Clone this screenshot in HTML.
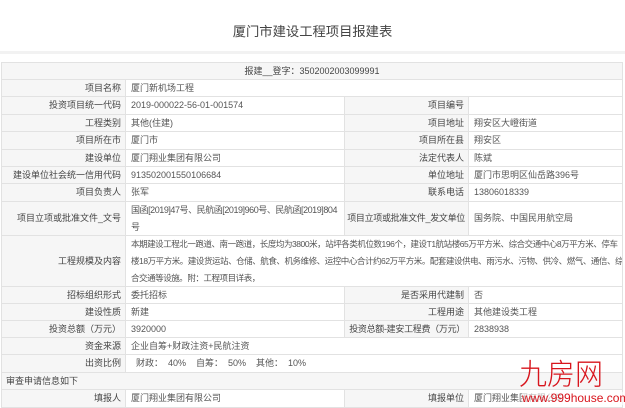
<!DOCTYPE html>
<html><head><meta charset="utf-8"><style>
*{margin:0;padding:0;box-sizing:border-box}
body{width:625px;height:408px;overflow:hidden;background:#fff;font-family:"Liberation Sans","Noto Sans CJK SC",sans-serif;font-size:9px;color:#555;position:relative}
.t{position:absolute;left:0;width:625px;top:21px;text-align:center;font-size:13.3px;color:#444}
.band{position:absolute;left:0;width:625px;top:51px;height:3px;background:#f2f2f2}
.c{position:absolute;border:1px solid #e2e2e2;margin:-1px 0 0 -1px;display:flex;align-items:center;padding:0 5px;line-height:17px;overflow:hidden;white-space:nowrap}
.l{background:#f6f6f6;justify-content:flex-end;color:#444;padding:0 4px}
.v{background:#fff}
.wm{position:absolute;color:#d8151d;font-family:"Noto Sans CJK SC",sans-serif;font-weight:300;font-size:28px;left:519px;top:356px;line-height:34px;transform:scaleY(1.05)}
.wu{position:absolute;color:#d8151d;font-size:12px;left:522px;top:392px;line-height:13px;background:rgba(255,255,255,.6)}
</style></head><body>
<div class="t">厦门市建设工程项目报建表</div>
<div class="band"></div>
<div class="c l" style="left:2px;top:63px;width:622px;height:18px;justify-content:center">报建__登字：3502002003099991</div>

<div class="c l" style="left:2px;top:80px;width:125px;height:18px">项目名称</div>
<div class="c v" style="left:126px;top:80px;width:498px;height:18px">厦门新机场工程</div>

<div class="c l" style="left:2px;top:97px;width:125px;height:19px">投资项目统一代码</div>
<div class="c v" style="left:126px;top:97px;width:220px;height:19px">2019-000022-56-01-001574</div>
<div class="c l" style="left:345px;top:97px;width:125px;height:19px">项目编号</div>
<div class="c v" style="left:469px;top:97px;width:155px;height:19px"></div>

<div class="c l" style="left:2px;top:115px;width:125px;height:18px">工程类别</div>
<div class="c v" style="left:126px;top:115px;width:220px;height:18px">其他(住建)</div>
<div class="c l" style="left:345px;top:115px;width:125px;height:18px">项目地址</div>
<div class="c v" style="left:469px;top:115px;width:155px;height:18px">翔安区大嶝街道</div>

<div class="c l" style="left:2px;top:132px;width:125px;height:19px">项目所在市</div>
<div class="c v" style="left:126px;top:132px;width:220px;height:19px">厦门市</div>
<div class="c l" style="left:345px;top:132px;width:125px;height:19px">项目所在县</div>
<div class="c v" style="left:469px;top:132px;width:155px;height:19px">翔安区</div>

<div class="c l" style="left:2px;top:150px;width:125px;height:18px">建设单位</div>
<div class="c v" style="left:126px;top:150px;width:220px;height:18px">厦门翔业集团有限公司</div>
<div class="c l" style="left:345px;top:150px;width:125px;height:18px">法定代表人</div>
<div class="c v" style="left:469px;top:150px;width:155px;height:18px">陈斌</div>

<div class="c l" style="left:2px;top:167px;width:125px;height:18px">建设单位社会统一信用代码</div>
<div class="c v" style="left:126px;top:167px;width:220px;height:18px">913502001550106684</div>
<div class="c l" style="left:345px;top:167px;width:125px;height:18px">单位地址</div>
<div class="c v" style="left:469px;top:167px;width:155px;height:18px">厦门市思明区仙岳路396号</div>

<div class="c l" style="left:2px;top:184px;width:125px;height:19px">项目负责人</div>
<div class="c v" style="left:126px;top:184px;width:220px;height:19px">张军</div>
<div class="c l" style="left:345px;top:184px;width:125px;height:19px">联系电话</div>
<div class="c v" style="left:469px;top:184px;width:155px;height:19px">13806018339</div>

<div class="c l" style="left:2px;top:202px;width:125px;height:35px">项目立项或批准文件_文号</div>
<div class="c v" style="left:126px;top:202px;width:220px;height:35px;letter-spacing:-0.45px;padding:0 3px 0 5px"><div>国函[2019]47号、民航函[2019]960号、民航函[2019]804<br>号</div></div>
<div class="c l" style="left:345px;top:202px;width:125px;height:35px;letter-spacing:-0.3px;padding:0 3px">项目立项或批准文件_发文单位</div>
<div class="c v" style="left:469px;top:202px;width:155px;height:35px">国务院、中国民用航空局</div>

<div class="c l" style="left:2px;top:236px;width:125px;height:52px">工程规模及内容</div>
<div class="c v" style="left:126px;top:236px;width:498px;height:52px;font-size:8.5px;padding:0 2px 0 5px;letter-spacing:-0.45px"><div>本期建设工程北一跑道、南一跑道，长度均为3800米，站坪各类机位数196个，建设T1航站楼65万平方米、综合交通中心8万平方米、停车<br>楼18万平方米。建设货运站、仓储、航食、机务维修、运控中心合计约62万平方米。配套建设供电、雨污水、污物、供冷、燃气、通信、综<br>合交通等设施。附：工程项目详表，</div></div>

<div class="c l" style="left:2px;top:287px;width:125px;height:18px">招标组织形式</div>
<div class="c v" style="left:126px;top:287px;width:220px;height:18px">委托招标</div>
<div class="c l" style="left:345px;top:287px;width:125px;height:18px">是否采用代建制</div>
<div class="c v" style="left:469px;top:287px;width:155px;height:18px">否</div>

<div class="c l" style="left:2px;top:304px;width:125px;height:18px">建设性质</div>
<div class="c v" style="left:126px;top:304px;width:220px;height:18px">新建</div>
<div class="c l" style="left:345px;top:304px;width:125px;height:18px">工程用途</div>
<div class="c v" style="left:469px;top:304px;width:155px;height:18px">其他建设类工程</div>

<div class="c l" style="left:2px;top:321px;width:125px;height:18px">投资总额（万元）</div>
<div class="c v" style="left:126px;top:321px;width:220px;height:18px">3920000</div>
<div class="c l" style="left:345px;top:321px;width:125px;height:18px;letter-spacing:-0.3px;padding:0 3px">投资总额-建安工程费（万元）</div>
<div class="c v" style="left:469px;top:321px;width:155px;height:18px">2838938</div>

<div class="c l" style="left:2px;top:338px;width:125px;height:18px">资金来源</div>
<div class="c v" style="left:126px;top:338px;width:498px;height:18px">企业自筹+财政注资+民航注资</div>

<div class="c l" style="left:2px;top:355px;width:125px;height:19px">出资比例</div>
<div class="c v" style="left:126px;top:355px;width:498px;height:19px">&nbsp;&nbsp;财政： &nbsp;40% &nbsp;&nbsp;&nbsp;自筹： &nbsp;50% &nbsp;&nbsp;&nbsp;其他： &nbsp;10%</div>

<div class="c l" style="left:2px;top:373px;width:622px;height:18px;justify-content:flex-start">审查申请信息如下</div>

<div class="c l" style="left:2px;top:390px;width:125px;height:19px">填报人</div>
<div class="c v" style="left:126px;top:390px;width:220px;height:19px">厦门翔业集团有限公司</div>
<div class="c l" style="left:345px;top:390px;width:125px;height:19px">填报单位</div>
<div class="c v" style="left:469px;top:390px;width:155px;height:19px">厦门翔业集团有限公司</div>

<div class="wm">九房网</div>
<div class="wu">www.999house.com</div>
</body></html>
